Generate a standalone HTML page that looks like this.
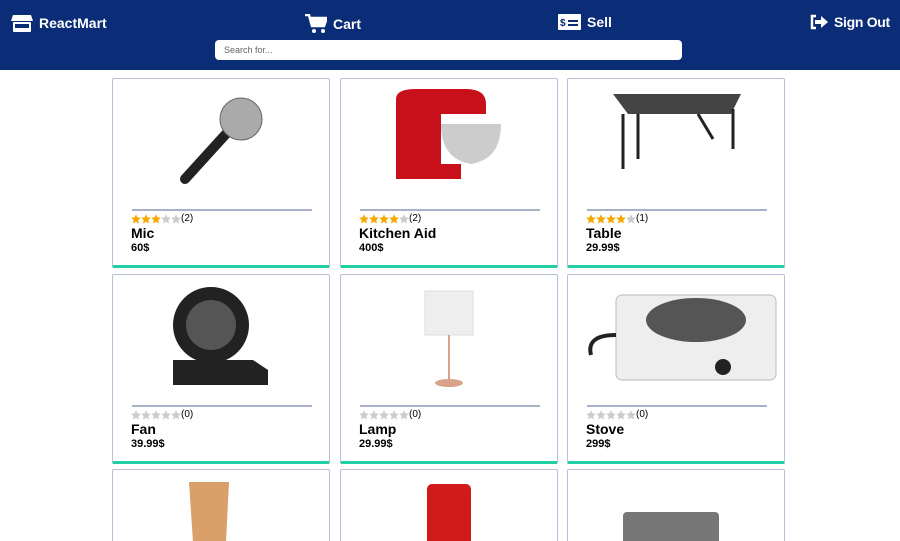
<!DOCTYPE html>
<html><head><meta charset="utf-8"><style>
*{box-sizing:border-box;margin:0;padding:0}
html,body{width:900px;height:541px;overflow:hidden}
body{background:#fff;font-family:"Liberation Sans",sans-serif;position:relative}
.hdr{position:absolute;left:0;top:0;width:900px;height:70px;background:#0b2c77}
.nav{position:absolute;top:14px;color:#fff;font-weight:bold;font-size:14px;display:flex;align-items:center;gap:6px}
.search{position:absolute;left:215px;top:40px;width:467px;height:20px;background:#fff;border-radius:4px;font-size:9px;color:#666;padding:5px 9px}
.card{position:absolute;width:218px;height:190px;border:1px solid #b9c0da;border-bottom:3px solid #22cfa5;border-radius:2px;background:#fff}
.img{position:absolute;left:0;top:0;width:216px;height:128px}
.line{position:absolute;left:19px;top:130px;width:180px;height:2px;background:#a9b1c9}
.stars{position:absolute;left:18px;top:134px;font-size:10px;color:#000;display:flex;align-items:center}
.s{width:10px;height:10px;display:block}
.nm{position:absolute;left:18px;top:146px;font-weight:bold;font-size:14px;color:#000}
.pr{position:absolute;left:18px;top:163px;font-weight:bold;font-size:11px;color:#000}
</style></head><body>
<svg width="0" height="0" style="position:absolute"><defs><path id="st" d="M5 0.3l1.45 3.1 3.35.4-2.5 2.3.7 3.35L5 7.8 2 9.45l.7-3.35L.2 3.8l3.35-.4z"/></defs></svg>
<div class="hdr">
 <div class="nav" style="left:11px"><svg width="22" height="18" viewBox="0 0 22 18"><path d="M2 1h18l2 6H0z" fill="#fff"/><rect x="2" y="8" width="18" height="10" rx="1" fill="#fff"/><rect x="4" y="10" width="14" height="4" fill="#0b2c77"/></svg>ReactMart</div>
 <div class="nav" style="left:305px"><svg width="22" height="20" viewBox="0 0 22 20"><path d="M0 1h4l3 11h12l3-8H6" fill="none" stroke="#fff" stroke-width="2.5"/><path d="M6 4h16l-3 8H8z" fill="#fff"/><circle cx="9" cy="17" r="2" fill="#fff"/><circle cx="18" cy="17" r="2" fill="#fff"/></svg>Cart</div>
 <div class="nav" style="left:558px"><svg width="23" height="16" viewBox="0 0 23 16"><rect width="23" height="16" rx="1" fill="#fff"/><text x="2" y="12" font-size="10" font-weight="bold" fill="#0b2c77" font-family="Liberation Sans">$</text><rect x="10" y="6" width="10" height="2" fill="#0b2c77"/><rect x="10" y="10" width="10" height="2" fill="#0b2c77"/></svg>Sell</div>
 <div class="nav" style="left:810px;letter-spacing:-0.3px"><svg width="18" height="16" viewBox="0 0 18 16"><path d="M6 2H2v12h4" fill="none" stroke="#fff" stroke-width="2.5"/><path d="M5 6h6V2l7 6-7 6v-4H5z" fill="#fff"/></svg>Sign Out</div>
 <div class="search">Search for...</div>
</div>

<div class="card" style="left:112px;top:78px"><svg class="img" viewBox="0 0 216 128"><path d="M72 100l50-55" stroke="#222" stroke-width="10" stroke-linecap="round"/><circle cx="128" cy="40" r="21" fill="#aaa" stroke="#666"/></svg><div class="line"></div><div class="stars"><svg class="s"><use href="#st" fill="#f5a900"/></svg><svg class="s"><use href="#st" fill="#f5a900"/></svg><svg class="s"><use href="#st" fill="#f5a900"/></svg><svg class="s"><use href="#st" fill="#ccc"/></svg><svg class="s"><use href="#st" fill="#ccc"/></svg>(2)</div><div class="nm">Mic</div><div class="pr">60$</div></div>
<div class="card" style="left:340px;top:78px"><svg class="img" viewBox="0 0 216 128"><path d="M55 20q0-10 20-10h50q20 0 20 15v10h-45v50h20v15h-65z" fill="#c8101a"/><path d="M100 45h60q0 35-30 40q-30-5-30-40z" fill="#ccc"/></svg><div class="line"></div><div class="stars"><svg class="s"><use href="#st" fill="#f5a900"/></svg><svg class="s"><use href="#st" fill="#f5a900"/></svg><svg class="s"><use href="#st" fill="#f5a900"/></svg><svg class="s"><use href="#st" fill="#f5a900"/></svg><svg class="s"><use href="#st" fill="#ccc"/></svg>(2)</div><div class="nm">Kitchen Aid</div><div class="pr">400$</div></div>
<div class="card" style="left:567px;top:78px"><svg class="img" viewBox="0 0 216 128"><path d="M45 15h128l-10 20H60z" fill="#444"/><path d="M55 35v55M165 30v40M70 35v45M130 35l15 25" stroke="#222" stroke-width="3"/></svg><div class="line"></div><div class="stars"><svg class="s"><use href="#st" fill="#f5a900"/></svg><svg class="s"><use href="#st" fill="#f5a900"/></svg><svg class="s"><use href="#st" fill="#f5a900"/></svg><svg class="s"><use href="#st" fill="#f5a900"/></svg><svg class="s"><use href="#st" fill="#ccc"/></svg>(1)</div><div class="nm">Table</div><div class="pr">29.99$</div></div>

<div class="card" style="left:112px;top:274px"><svg class="img" viewBox="0 0 216 128"><circle cx="98" cy="50" r="38" fill="#222"/><circle cx="98" cy="50" r="25" fill="#555"/><path d="M60 85h80l15 10v15H60z" fill="#222"/></svg><div class="line"></div><div class="stars"><svg class="s"><use href="#st" fill="#ccc"/></svg><svg class="s"><use href="#st" fill="#ccc"/></svg><svg class="s"><use href="#st" fill="#ccc"/></svg><svg class="s"><use href="#st" fill="#ccc"/></svg><svg class="s"><use href="#st" fill="#ccc"/></svg>(0)</div><div class="nm">Fan</div><div class="pr">39.99$</div></div>
<div class="card" style="left:340px;top:274px"><svg class="img" viewBox="0 0 216 128"><rect x="84" y="16" width="48" height="44" fill="#eee" stroke="#ddd"/><path d="M108 60v45" stroke="#d9a38a" stroke-width="2"/><ellipse cx="108" cy="108" rx="14" ry="4" fill="#d9a38a"/></svg><div class="line"></div><div class="stars"><svg class="s"><use href="#st" fill="#ccc"/></svg><svg class="s"><use href="#st" fill="#ccc"/></svg><svg class="s"><use href="#st" fill="#ccc"/></svg><svg class="s"><use href="#st" fill="#ccc"/></svg><svg class="s"><use href="#st" fill="#ccc"/></svg>(0)</div><div class="nm">Lamp</div><div class="pr">29.99$</div></div>
<div class="card" style="left:567px;top:274px"><svg class="img" viewBox="0 0 216 128"><rect x="48" y="20" width="160" height="85" rx="6" fill="#eee" stroke="#bbb"/><ellipse cx="128" cy="45" rx="50" ry="22" fill="#555"/><circle cx="155" cy="92" r="8" fill="#222"/><path d="M48 60q-30 0-25 20" stroke="#222" stroke-width="4" fill="none"/></svg><div class="line"></div><div class="stars"><svg class="s"><use href="#st" fill="#ccc"/></svg><svg class="s"><use href="#st" fill="#ccc"/></svg><svg class="s"><use href="#st" fill="#ccc"/></svg><svg class="s"><use href="#st" fill="#ccc"/></svg><svg class="s"><use href="#st" fill="#ccc"/></svg>(0)</div><div class="nm">Stove</div><div class="pr">299$</div></div>

<div class="card" style="left:112px;top:469px"><svg class="img" viewBox="0 0 216 128"><path d="M76 12h40l-3 60H80z" fill="#d9a06a"/></svg></div>
<div class="card" style="left:340px;top:469px"><svg class="img" viewBox="0 0 216 128"><rect x="86" y="14" width="44" height="100" rx="5" fill="#d11a1a"/></svg></div>
<div class="card" style="left:567px;top:469px"><svg class="img" viewBox="0 0 216 128"><rect x="55" y="42" width="96" height="40" rx="4" fill="#777"/></svg></div>
</body></html>
